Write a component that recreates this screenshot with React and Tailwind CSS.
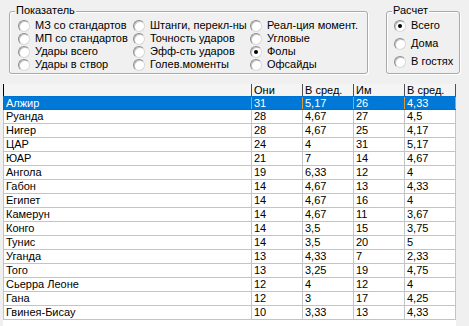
import React from 'react'

const ROWS = [
  ['Алжир', '31', '5,17', '26', '4,33'],
  ['Руанда', '28', '4,67', '27', '4,5'],
  ['Нигер', '28', '4,67', '25', '4,17'],
  ['ЦАР', '24', '4', '31', '5,17'],
  ['ЮАР', '21', '7', '14', '4,67'],
  ['Ангола', '19', '6,33', '12', '4'],
  ['Габон', '14', '4,67', '13', '4,33'],
  ['Египет', '14', '4,67', '16', '4'],
  ['Камерун', '14', '4,67', '11', '3,67'],
  ['Конго', '14', '3,5', '15', '3,75'],
  ['Тунис', '14', '3,5', '20', '5'],
  ['Уганда', '13', '4,33', '7', '2,33'],
  ['Того', '13', '3,25', '19', '4,75'],
  ['Сьерра Леоне', '12', '4', '12', '4'],
  ['Гана', '12', '3', '17', '4,25'],
  ['Гвинея-Бисау', '10', '3,33', '13', '4,33'],
]

const COLS = [
  ['МЗ со стандартов', 'МП со стандартов', 'Удары всего', 'Удары в створ'],
  ['Штанги, перекл-ны', 'Точность ударов', 'Эфф-сть ударов', 'Голев.моменты'],
  ['Реал-ция момент.', 'Угловые', 'Фолы', 'Офсайды'],
]

function Radio({ label, checked }) {
  return (
    <div className="flex items-center h-[13px] whitespace-nowrap">
      <span className="w-[12px] h-[12px] rounded-full border border-t-[#8c8c8c] border-l-[#8c8c8c] border-b-[#d8d8d8] border-r-[#d8d8d8] bg-white shadow-[inset_1px_1px_0_#c4c4c4] flex items-center justify-center shrink-0">
        {checked && <span className="w-[4px] h-[4px] rounded-full bg-black" />}
      </span>
      <span className="ml-[5px] leading-[13px]">{label}</span>
    </div>
  )
}

function GroupBox({ title, className, children }) {
  return (
    <div className={`relative border border-[#a9a9a9] rounded-[3px] shadow-[inset_1px_1px_0_#fff,1px_1px_0_#fff] ${className}`}>
      <span className="absolute -top-[8px] left-[5px] px-[1px] bg-[#f0f0f0] leading-[13px]">{title}</span>
      {children}
    </div>
  )
}

export default function App() {
  const widths = ['w-[248px]', 'w-[51px]', 'w-[51px]', 'w-[51px]', 'w-[51px]']
  return (
    <div className="w-[469px] h-[326px] overflow-hidden bg-[#f0f0f0] text-[11px] text-black" style={{ fontFamily: '"Liberation Sans", Arial, sans-serif' }}>
      <div className="flex pt-[11px] pl-[9px]">
        <GroupBox title="Показатель" className="w-[359px] h-[63px] pt-[7px] pl-[8px]">
          <div className="grid grid-cols-[115px_117px_1fr]">
            {COLS.map((col, ci) => (
              <div key={ci} className="flex flex-col">
                {col.map((l) => <Radio key={l} label={l} checked={l === 'Фолы'} />)}
              </div>
            ))}
          </div>
        </GroupBox>
        <GroupBox title="Расчет" className="ml-[18px] w-[74px] h-[63px] pt-[7px] pl-[7px]">
          <div className="flex flex-col gap-[5px]">
            <Radio label="Всего" checked />
            <Radio label="Дома" />
            <Radio label="В гостях" />
          </div>
        </GroupBox>
      </div>

      <div className="mt-[10px] ml-[3px] w-[453px] bg-white h-[243px]">
        <div className="flex h-[12px] bg-[#f4f4f4] border-l border-black">
          {['', 'Они', 'В сред.', 'Им', 'В сред.'].map((h, i) => (
            <div key={i} className={`${widths[i]} ${i === 0 ? 'w-[247px]' : ''} border-r border-[#505050] pl-[2px] leading-[12px]`}>{h}</div>
          ))}
        </div>
        {ROWS.map((r, ri) => {
          const sel = ri === 0
          return (
            <div key={ri} className={`flex h-[14px] border-l border-b ${sel ? 'bg-[#0078d7] text-white border-[#7a4a20] border-dotted border-t' : 'border-[#c4c4c4]'}`}>
              {r.map((c, ci) => (
                <div key={ci} className={`${widths[ci]} ${ci === 0 ? 'w-[247px]' : ''} border-r ${sel ? 'border-[#d99a3c]' : 'border-[#c4c4c4]'} pl-[2px] leading-[13px]`}>{c}</div>
              ))}
            </div>
          )
        })}
      </div>
    </div>
  )
}
